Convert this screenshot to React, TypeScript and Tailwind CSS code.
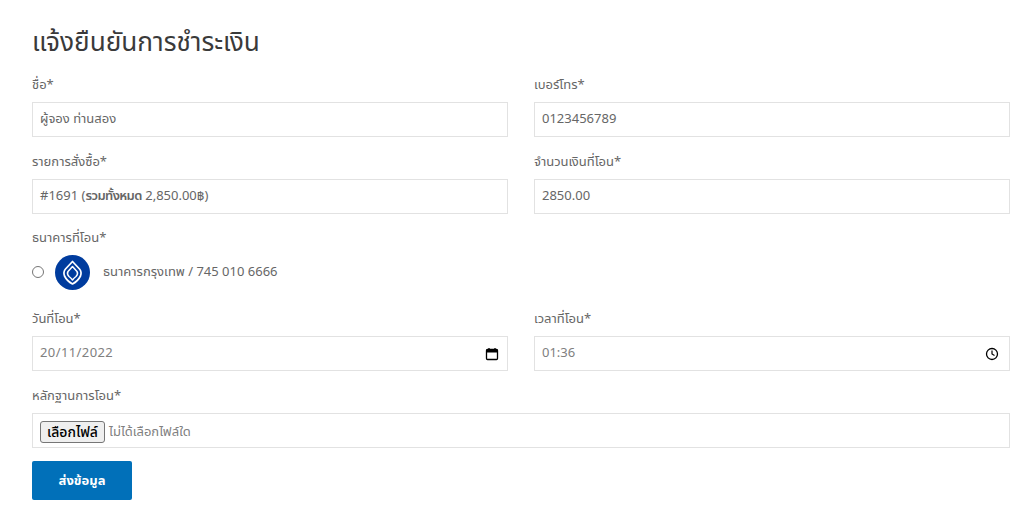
const font = "font-['Noto_Sans','Noto_Sans_Thai','Noto_Sans_CJK_SC',sans-serif]";
function Field({ label, value, right, muted, pr = "pr-[10px]", track = "" }: { label: string; value: React.ReactNode; right?: React.ReactNode; muted?: boolean; pr?: string; track?: string }) {
  return (
    <div className="flex flex-col">
      <div className="text-[13px] leading-[22px] text-[#666] h-[22px]">{label}</div>
      <div className={`mt-[7px] h-[35px] border border-[#e2e2e2] flex items-center justify-between pl-[7px] ${pr} text-[13px] ${muted ? "text-[#808080]" : "text-[#666]"}`}>
        <span className={`mb-[2px] ${track}`}>{value}</span>{right}
      </div>
    </div>
  );
}
function BBL() {
  return (
    <svg width="35" height="35" viewBox="0 0 35 35" className="block">
      <circle cx="17.5" cy="17.5" r="17.5" fill="#003c9e" />
      <path d="M17.500 6.500L24.500 14Q27 17 25.500 21Q23 26 17.500 29Q12 26 9.500 21Q8 17 10.500 14Z" fill="none" stroke="#fff" strokeWidth="1.700" strokeLinejoin="round" />
      <path d="M17.500 11.500L22 16.500Q23.500 19 21 21.500Q19 23 17.500 25Q16 23 14 21.500Q11.500 19 13 16.500Z" fill="none" stroke="#fff" strokeWidth="1.500" strokeLinejoin="round" />
    </svg>
  );
}
export default function App() {
  return (
    <div className={`w-[1024px] h-[524px] bg-white overflow-hidden px-8 pt-[21px] ${font}`}>
      <h1 className="text-[26.2px] leading-[40px] text-[#3a3a3a] h-[40px]">แจ้งยืนยันการชำระเงิน</h1>
      <div className="mt-[12px] grid grid-cols-[476px_476px] gap-x-[26px] gap-y-[13px]">
        <Field label="ชื่อ*" value="ผู้จอง ท่านสอง" />
        <Field label="เบอร์โทร*" value="0123456789" />
        <Field label="รายการสั่งซื้อ*" value={<>#1691 (<span className="font-semibold tracking-[-0.6px]">รวมทั้งหมด</span> 2,850.00฿)</>} />
        <Field label="จำนวนเงินที่โอน*" value="2850.00" />
      </div>
      <div className="mt-[12px] text-[13px] leading-[22px] text-[#666]">ธนาคารที่โอน*</div>
      <div className="mt-[7px] flex items-center h-[35px]">
        <span className="mb-[2px] w-[12px] h-[12px] rounded-full border border-[#767676]" />
        <span className="ml-[11px]"><BBL /></span>
        <span className="mb-[2px] ml-[13px] text-[13px] text-[#666]">ธนาคารกรุงเทพ / 745 010 6666</span>
      </div>
      <div className="mt-[17px] grid grid-cols-[476px_476px] gap-x-[26px]">
        <Field muted pr="pr-[8px]" track="tracking-[0.4px]" label="วันที่โอน*" value="20/11/2022" right={<svg width="14" height="14" viewBox="0 0 14 14"><rect x="1.500" y="2.500" width="11" height="10" rx="1" fill="none" stroke="#000" strokeWidth="1.300"/><rect x="1.500" y="2.500" width="11" height="3" fill="#000"/><path d="M4 1v2M10 1v2" stroke="#000" strokeWidth="1.300"/></svg>} />
        <Field muted pr="pr-[10px]" label="เวลาที่โอน*" value="01:36" right={<svg width="14" height="14" viewBox="0 0 14 14"><circle cx="7" cy="7" r="5.500" fill="none" stroke="#000" strokeWidth="1.300"/><path d="M7 3.500V7l2.500 1.500" fill="none" stroke="#000" strokeWidth="1.200"/></svg>} />
      </div>
      <div className="mt-[13px] text-[13px] leading-[22px] text-[#666]">หลักฐานการโอน*</div>
      <div className="mt-[7px] h-[35px] w-[978px] border border-[#e2e2e2] flex items-center pl-[7px] pt-[2px] text-[13px] text-[#808080]">
        <span className="h-[22px] w-[65px] justify-center flex items-center bg-[#efefef] border border-[#767676] rounded-[3px] text-[14px] font-medium text-[#000]">เลือกไฟล์</span>
        <span className="ml-[4px]">ไม่ได้เลือกไฟล์ใด</span>
      </div>
      <div className="mt-[13px] w-[100px] h-[39px] bg-[#0170b9] rounded-[2px] flex items-center justify-center text-white text-[13px] font-bold">ส่งข้อมูล</div>
    </div>
  );
}
